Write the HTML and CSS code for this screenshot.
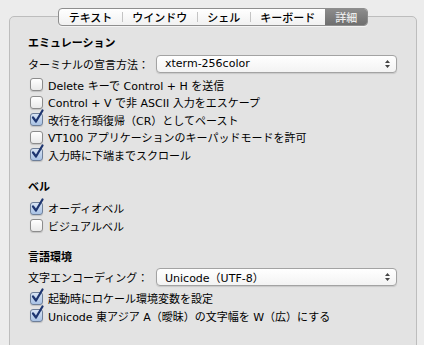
FILE: index.html
```html
<!DOCTYPE html>
<html lang="ja">
<head>
    <meta charset="UTF-8">
    <meta name="viewport" content="width=device-width, initial-scale=1.0">
    <title>詳細</title>
    <link rel="stylesheet" href="styles.css">
</head>
<body>
    <div class="window">
        <nav class="tabs">
            <span class="tab">テキスト</span>
            <span class="tab">ウインドウ</span>
            <span class="tab">シェル</span>
            <span class="tab">キーボード</span>
            <span class="tab selected">詳細</span>
        </nav>
        <main class="panel">
            <h2 class="heading">エミュレーション</h2>
            <div class="field">
                <span class="label">ターミナルの宣言方法：</span>
                <div class="popup">
                    <span>xterm-256color</span>
                    <svg class="arrows" width="7" height="10" viewBox="0 0 7 10"><path d="M3.5 1 L6 4 H1 Z M3.5 9 L6 6 H1 Z" fill="#444"/></svg>
                </div>
            </div>
            <div class="options">
                <label class="option"><span class="box"></span>Delete キーで Control + H を送信</label>
                <label class="option"><span class="box"></span>Control + V で非 ASCII 入力をエスケープ</label>
                <label class="option"><span class="box checked"></span>改行を行頭復帰（CR）としてペースト</label>
                <label class="option"><span class="box"></span>VT100 アプリケーションのキーパッドモードを許可</label>
                <label class="option"><span class="box checked"></span>入力時に下端までスクロール</label>
            </div>

            <h2 class="heading section">ベル</h2>
            <div class="options bell">
                <label class="option"><span class="box checked"></span>オーディオベル</label>
                <label class="option"><span class="box"></span>ビジュアルベル</label>
            </div>

            <h2 class="heading section last">言語環境</h2>
            <div class="field">
                <span class="label">文字エンコーディング：</span>
                <div class="popup">
                    <span>Unicode（UTF-8）</span>
                    <svg class="arrows" width="7" height="10" viewBox="0 0 7 10"><path d="M3.5 1 L6 4 H1 Z M3.5 9 L6 6 H1 Z" fill="#444"/></svg>
                </div>
            </div>
            <div class="options">
                <label class="option"><span class="box checked"></span>起動時にロケール環境変数を設定</label>
                <label class="option"><span class="box checked"></span>Unicode 東アジア A（曖昧）の文字幅を W（広）にする</label>
            </div>
        </main>
    </div>
    <script>
        // draw the check marks into the checked boxes
        const mark = '<svg width="15" height="16" viewBox="0 0 15 16"><path d="M3 8.5 L6 12.5 L12.5 1.5" fill="none" stroke="#1d3570" stroke-width="2.2" stroke-linecap="round" stroke-linejoin="round"/></svg>';
        document.querySelectorAll('.box.checked').forEach(box => {
            box.innerHTML = mark;
        });
    </script>
</body>
</html>
```

FILE: styles.css
```css
body {
    margin: 0;
    background: #ececec;
    font-family: 'DejaVu Sans', 'Noto Sans CJK JP', sans-serif;
    font-size: 11px;
    color: #000;
}
.window {
    width: 424px;
    height: 345px;
    overflow: hidden;
    display: flex;
    flex-direction: column;
    padding-top: 8px;
    box-sizing: border-box;
}
.tabs {
    align-self: center;
    flex-shrink: 0;
    display: flex;
    align-items: center;
    position: relative;
    z-index: 1;
    margin-left: 2px;
    border: 1px solid #8e8e8e;
    border-radius: 4px;
    background: linear-gradient(to bottom, #ffffff, #f1f1f1);
    box-shadow: 0 1px 0 rgba(255, 255, 255, 0.6);
    overflow: hidden;
    height: 16px;
}
.tab {
    position: relative;
    padding: 0 10px;
    line-height: 16px;
    font-family: 'Noto Sans CJK JP', sans-serif;
    font-weight: 500;
}
.tab + .tab::before {
    content: "";
    position: absolute;
    left: 0;
    top: 3px;
    bottom: 3px;
    border-left: 1px solid #c4c4c4;
}
.tab.selected {
    background: linear-gradient(to bottom, #8c8c8c, #6f6f6f);
    color: #ececec;
}
.tab.selected::before {
    display: none;
}
.panel {
    margin: -10px 7px 0 9px;
    height: 400px;
    flex-shrink: 0;
    background: #e3e3e3;
    border: 1px solid #bdbdbd;
    border-radius: 5px;
    padding: 17px 19px 0 18px;
    display: flex;
    flex-direction: column;
}
.heading {
    margin: 0;
    height: 16px;
    line-height: 16px;
    font-size: 11px;
    font-weight: bold;
    font-family: 'Noto Sans CJK JP', sans-serif;
}
.heading.section {
    margin-top: 14px;
}
.heading.last {
    margin-top: 13px;
}
.field {
    display: flex;
    align-items: center;
    margin-top: 5px;
    height: 17px;
}
.label {
    width: 128px;
    font-family: 'Noto Sans CJK JP', sans-serif;
}
.popup {
    flex: 1;
    height: 16px;
    display: flex;
    align-items: center;
    justify-content: space-between;
    padding: 0 5px 0 8px;
    background: linear-gradient(to bottom, #ffffff, #f3f3f3);
    border: 1px solid #a3a3a3;
    border-radius: 4px;
    box-shadow: 0 1px 1px rgba(0, 0, 0, 0.12);
}
.options {
    display: flex;
    flex-direction: column;
    margin-top: 4px;
}
.options.bell {
    margin-top: 6px;
}
.option {
    display: flex;
    align-items: center;
    height: 17.5px;
    padding-left: 2px;
    white-space: nowrap;
}
.box {
    position: relative;
    width: 11px;
    height: 11px;
    margin-right: 5px;
    flex-shrink: 0;
    border: 1px solid #8c8c8c;
    border-radius: 3px;
    background: linear-gradient(to bottom, #ffffff, #e9e9e9);
    box-shadow: 0 1px 1px rgba(0, 0, 0, 0.15);
}
.box.checked {
    background: linear-gradient(to bottom, #d8e4f4, #a9c2e4);
    border-color: #6e7f99;
}
.box svg {
    position: absolute;
    left: -1px;
    top: -5px;
}
```
